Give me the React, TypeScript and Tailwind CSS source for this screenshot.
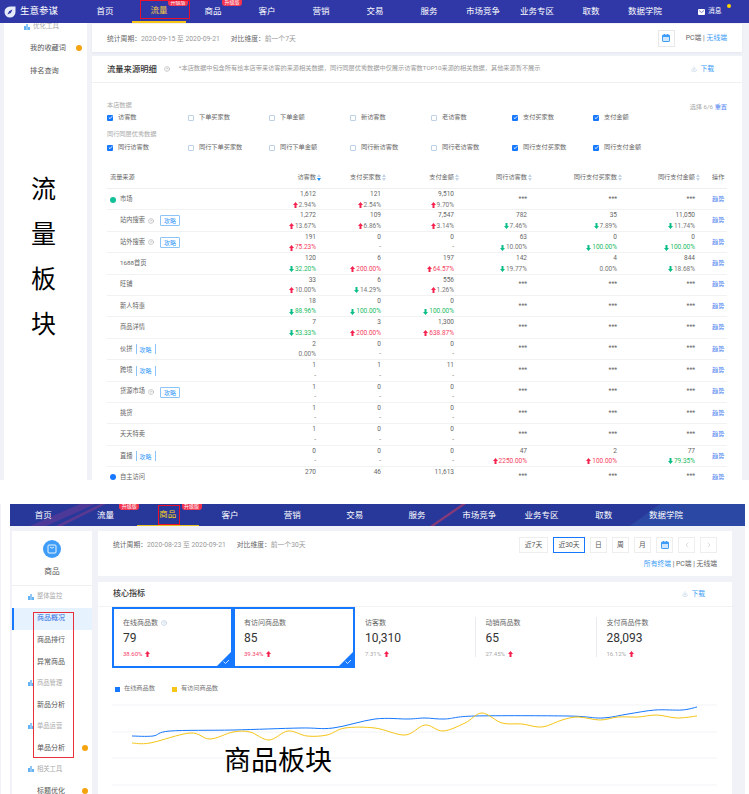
import { ChevronLeft, ChevronRight, CircleHelp, Download } from "lucide-react";

const FONT = "[font-family:Roboto,'Noto_Sans_CJK_SC',sans-serif]";

type Cell = { v: string; p?: string; up?: boolean };
type Row = {
  name: string;
  dot?: string;
  help?: boolean;
  pill?: "full" | "side";
  cells: Cell[];
};

const up = (v: string, p: string): Cell => ({ v, p, up: true });
const down = (v: string, p: string): Cell => ({ v, p, up: false });
const none = (v: string): Cell => ({ v, p: "-" });
const flat = (v: string): Cell => ({ v, p: "0.00%" });
const STARS: Cell[] = [{ v: "***" }, { v: "***" }, { v: "***" }];

const rows: Row[] = [
  { name: "市场", dot: "bg-[#10c096]", cells: [up("1,612", "2.94%"), up("121", "2.54%"), up("9,510", "9.70%"), ...STARS] },
  { name: "站内搜索", help: true, pill: "full", cells: [up("1,272", "13.67%"), up("109", "6.86%"), up("7,547", "3.14%"), down("782", "7.46%"), down("35", "7.89%"), down("11,050", "11.74%")] },
  { name: "站外搜索", help: true, pill: "full", cells: [up("191", "75.23%"), none("0"), none("0"), down("63", "10.00%"), down("0", "100.00%"), down("0", "100.00%")] },
  { name: "1688首页", cells: [down("120", "32.20%"), up("6", "200.00%"), up("197", "64.57%"), down("142", "19.77%"), flat("4"), down("844", "18.68%")] },
  { name: "旺铺", cells: [up("33", "10.00%"), down("6", "14.29%"), up("556", "1.26%"), ...STARS] },
  { name: "新人特惠", cells: [down("18", "88.96%"), down("0", "100.00%"), down("0", "100.00%"), ...STARS] },
  { name: "商品详情", cells: [down("7", "53.33%"), up("3", "200.00%"), up("1,300", "638.87%"), ...STARS] },
  { name: "伙拼", pill: "side", cells: [flat("2"), none("0"), none("0"), ...STARS] },
  { name: "跨境", pill: "side", cells: [none("1"), none("1"), none("11"), ...STARS] },
  { name: "货源市场", help: true, pill: "full", cells: [none("1"), none("0"), none("0"), ...STARS] },
  { name: "挑货", cells: [none("1"), none("0"), none("0"), ...STARS] },
  { name: "天天特卖", cells: [none("1"), none("0"), none("0"), ...STARS] },
  { name: "直播", pill: "side", cells: [none("0"), none("0"), none("0"), up("47", "2250.00%"), up("2", "100.00%"), down("77", "79.35%")] },
  { name: "自主访问", dot: "bg-[#1677ff]", cells: [{ v: "270" }, { v: "46" }, { v: "11,613" }, ...STARS] },
];

const Arrow = ({ isUp }: { isUp: boolean }) => (
  <svg width="5" height="6" viewBox="0 0 5 6" className="shrink-0">
    <polygon
      points={isUp ? "2.5,0 5,3 3.5,3 3.5,6 1.5,6 1.5,3 0,3" : "2.5,6 5,3 3.5,3 3.5,0 1.5,0 1.5,3 0,3"}
      fill={isUp ? "#f5224f" : "#0bbd87"}
    />
  </svg>
);

const SortIcon = ({ active }: { active?: boolean }) => (
  <svg width="4" height="7" viewBox="0 0 4 7" className="shrink-0 ml-px">
    <polygon points="2,0 4,3 0,3" fill="#c3d3e8" />
    <polygon points="2,7 4,4 0,4" fill={active ? "#1890ff" : "#c3d3e8"} />
  </svg>
);

const BarsIcon = () => (
  <svg width="6" height="6" viewBox="0 0 6 6" className="shrink-0">
    <rect x="0" y="2" width="2" height="4" fill="#63b3f5" />
    <rect x="2" y="0" width="2" height="6" fill="#8fc8f8" />
    <rect x="4" y="3" width="2" height="3" fill="#63b3f5" />
  </svg>
);

const CalendarIcon = () => (
  <svg width="8" height="8" viewBox="0 0 8 8">
    <rect x="0.5" y="1" width="7" height="6.5" rx="0.6" fill="#cfe6fd" stroke="#3d9df8" />
    <rect x="0.5" y="1" width="7" height="2" fill="#3d9df8" />
    <rect x="2" y="0" width="1" height="1.5" fill="#3d9df8" />
    <rect x="5" y="0" width="1" height="1.5" fill="#3d9df8" />
  </svg>
);

const Pill = ({ kind }: { kind: "full" | "side" }) => (
  <span
    className={
      kind === "full"
        ? "ml-[6px] w-[20px] h-[11px] flex items-center justify-center border border-[#8cc4f8] rounded-[1px] text-[6px] text-[#3d9df8]"
        : "ml-[3px] w-[20px] h-[10px] flex items-center justify-center border-x border-[#8cc4f8] text-[6px] text-[#3d9df8]"
    }
  >
    攻略
  </span>
);

const ValueCell = ({ cell }: { cell: Cell }) => {
  if (!cell.p) {
    const single = cell.v === "***";
    return <div className={`text-right text-[#666] text-[6.5px] ${single ? "" : "self-start pt-px"}`}>{cell.v}</div>;
  }
  const pct = parseFloat(cell.p);
  const big = !isNaN(pct) && pct >= 20;
  const color = big ? (cell.up ? "text-[#f5405f]" : "text-[#22bb66]") : "text-[#777]";
  return (
    <div className="flex flex-col items-end text-[6.5px] leading-[10.5px] text-[#666]">
      <span>{cell.v}</span>
      <span className={`flex items-center gap-px ${color}`}>
        {cell.p !== "-" && cell.p !== "0.00%" && <Arrow isUp={!!cell.up} />}
        {cell.p}
      </span>
    </div>
  );
};

const TABLE_COLS = "grid grid-cols-[144px_65px_65px_73px_73px_90px_78px_32px] items-center";

const TrafficTable = () => (
  <div>
    <div className={`${TABLE_COLS} h-[22px] border-b border-[#eeeeee] text-[6.2px] text-[#666]`}>
      <span className="pl-[3px]">流量来源</span>
      {["访客数", "支付买家数", "支付金额", "同行访客数", "同行支付买家数", "同行支付金额"].map((h, i) => (
        <span key={h} className="flex justify-end items-center mr-[-5px] whitespace-nowrap">
          {h}
          <SortIcon active={i === 0} />
        </span>
      ))}
      <span className="pl-[17px]">操作</span>
    </div>
    {rows.map((row) => (
      <div key={row.name} className={`${TABLE_COLS} h-[21.4px] border-b border-[#f2f2f2]`}>
        <div className="flex items-center text-[6.25px] text-[#666] pl-[13px] relative">
          {row.dot && <span className={`absolute left-[3px] w-[6px] h-[6px] rounded-full ${row.dot}`} />}
          <span>{row.name}</span>
          {row.help && <CircleHelp size={6} strokeWidth={1.5} className="ml-[3px] text-[#888]" />}
          {row.pill && <Pill kind={row.pill} />}
        </div>
        {row.cells.map((c, i) => (
          <ValueCell key={i} cell={c} />
        ))}
        <span className="pl-[17px] text-[6.2px] text-[#4a7ff0]">趋势</span>
      </div>
    ))}
  </div>
);

const CheckItem = ({ label, on }: { label: string; on?: boolean }) => (
  <div className="flex items-center w-[81px] text-[6.2px] text-[#666]">
    <span
      className={`w-[6px] h-[6px] mr-[5px] rounded-[1px] flex items-center justify-center shrink-0 ${
        on ? "bg-[#1677ff]" : "border border-[#bcd0e6] bg-white"
      }`}
    >
      {on && (
        <svg width="5" height="5" viewBox="0 0 5 5">
          <path d="M0.8 2.5 L2 3.7 L4.2 1.2" stroke="white" strokeWidth="0.9" fill="none" />
        </svg>
      )}
    </span>
    {label}
  </div>
);

const Logo = () => (
  <svg width="12" height="12" viewBox="0 0 12 12">
    <path d="M6 0.5 H11.5 V6 A5.5 5.5 0 1 1 6 0.5 Z" fill="#e8ecfa" />
    <path d="M8.6 3.4 L6.8 7 L3.4 8.6 L5.2 5 Z" fill="#3038a8" />
  </svg>
);

const topNav = ["首页", "流量", "商品", "客户", "营销", "交易", "服务", "市场竞争", "业务专区", "取数", "数据学院"];

const TopPanel = () => (
  <div className="h-[480px] bg-[#f1f2f8] overflow-hidden">
    <div className="h-[23px] bg-[#3038a8] flex items-center text-white relative">
      <div className="w-[78px] pl-[4px] flex items-center gap-[4px] text-[9.5px]">
        <Logo />
        生意参谋
      </div>
      {topNav.map((n, i) => (
        <div
          key={n}
          className={`relative w-[54px] h-full flex items-center justify-center text-[8.5px] ${
            i === 1 ? "text-[#f5c842] border-b-2 border-[#f5c518]" : ""
          }`}
        >
          {n}
          {(i === 1 || i === 2) && (
            <span className="absolute left-[36px] top-0 w-[20px] h-[6px] overflow-hidden rounded-b-[3px] bg-[#f0334f] text-[5px] leading-[5px] text-center text-white">
              升级版
            </span>
          )}
        </div>
      ))}
      <div className="ml-[26px] flex items-center gap-[3px] text-[6.8px] relative">
        <svg width="7" height="6" viewBox="0 0 7 6">
          <rect width="7" height="6" rx="1" fill="white" />
          <path d="M1 1.5 L3.5 3.5 L6 1.5" stroke="#3038a8" strokeWidth="0.6" fill="none" />
        </svg>
        消息
        <span className="absolute right-[-9px] top-[-2px] w-[4px] h-[4px] rounded-full bg-[#ffd400]" />
      </div>
      <div className="absolute left-[140px] top-0 w-[50px] h-[19px] border border-[#e8102a]" />
    </div>

    <div className="flex pl-[4px] gap-[5px]">
      <div className="w-[83px] h-[457px] bg-white shrink-0">
        <div className="h-[8px] pl-[20px] flex items-center gap-[3px] text-[6.5px] text-[#aaa]">
          <BarsIcon />
          优化工具
        </div>
        <div className="mt-[6px] h-[22px] pl-[26px] pr-[5px] flex items-center justify-between text-[7.2px] text-[#555]">
          我的收藏词
          <span className="w-[6px] h-[6px] rounded-full bg-[#f5a30f]" />
        </div>
        <div className="mt-px h-[22px] pl-[26px] flex items-center text-[7.2px] text-[#555]">排名查询</div>
        <div className="mt-[85px] flex flex-col pl-[27px] text-[25px] leading-[45px] text-black">
          <span>流</span>
          <span>量</span>
          <span>板</span>
          <span>块</span>
        </div>
      </div>

      <div className="w-[650px] shrink-0 pt-px">
        <div className="h-[28px] bg-white px-[15px] flex items-center justify-between shadow-[0_1px_2px_#e4e6f0] text-[6.8px]">
          <div className="flex gap-[11px] pt-[2px] text-[#999]">
            <span>
              <span className="text-[#666]">统计周期：</span>2020-09-15 至 2020-09-21
            </span>
            <span>
              <span className="text-[#666]">对比维度：</span>前一个7天
            </span>
          </div>
          <div className="flex items-center">
            <span className="w-[17px] h-[17px] border border-[#e8e8e8] flex items-center justify-center mr-[11px]">
              <CalendarIcon />
            </span>
            <span className="text-[#666]">PC端 | </span>
            <span className="text-[#3d9df8] ml-[2px]">无线端</span>
          </div>
        </div>

        <div className="mt-[4px] bg-white h-[430px]">
          <div className="h-[27px] px-[15px] flex items-center border-b border-[#f0f0f0]">
            <span className="text-[8.3px] font-medium text-[#333]">流量来源明细</span>
            <CircleHelp size={6} strokeWidth={1.5} className="ml-[7px] text-[#888]" />
            <span className="ml-[9px] text-[6.2px] text-[#999] whitespace-nowrap">
              *本店数据中包含所有给本店带来访客的来源相关数据，同行同层优秀数据中仅展示访客数TOP10来源的相关数据，其他来源暂不展示
            </span>
            <span className="ml-auto mr-[13px] flex items-center gap-[3px] text-[6.8px] text-[#3d9df8]">
              <Download size={6} className="text-[#aac4dc]" />
              下载
            </span>
          </div>
          <div className="px-[15px]">
            <div className="pt-[17px] h-[28px] flex justify-between items-center text-[6.2px] text-[#aaa]">
              <span>本店数据</span>
              <span className="mt-[4px]">
                选择 6/6 <span className="text-[#4a7ff0]">重置</span>
              </span>
            </div>
            <div className="flex h-[14px] items-center">
              <CheckItem label="访客数" on />
              <CheckItem label="下单买家数" />
              <CheckItem label="下单金额" />
              <CheckItem label="新访客数" />
              <CheckItem label="老访客数" />
              <CheckItem label="支付买家数" on />
              <CheckItem label="支付金额" on />
            </div>
            <div className="mt-[5px] h-[10px] flex items-center text-[6.2px] text-[#aaa]">同行同层优秀数据</div>
            <div className="flex h-[16px] items-center">
              <CheckItem label="同行访客数" on />
              <CheckItem label="同行下单买家数" />
              <CheckItem label="同行下单金额" />
              <CheckItem label="同行新访客数" />
              <CheckItem label="同行老访客数" />
              <CheckItem label="同行支付买家数" on />
              <CheckItem label="同行支付金额" on />
            </div>
            <div className="mt-[11px]">
              <TrafficTable />
            </div>
          </div>
        </div>
      </div>
    </div>
  </div>
);

const metrics = [
  { label: "在线商品数", value: "79", pct: "38.60%", active: true, help: true, box: "w-[121px]" },
  { label: "有访问商品数", value: "85", pct: "39.34%", active: true, box: "w-[122px]" },
  { label: "访客数", value: "10,310", pct: "7.31%", box: "w-[119.5px] pl-[10px]" },
  { label: "动销商品数", value: "65", pct: "27.45%", box: "w-[121px] pl-[11px]", divider: true },
  { label: "支付商品件数", value: "28,093", pct: "16.12%", box: "w-[121px] pl-[11px]", divider: true },
];

const sideItems: { label: string; kind: "group" | "item" | "active"; dot?: boolean }[] = [
  { label: "整体监控", kind: "group" },
  { label: "商品概况", kind: "active" },
  { label: "商品排行", kind: "item" },
  { label: "异常商品", kind: "item" },
  { label: "商品管理", kind: "group" },
  { label: "新品分析", kind: "item" },
  { label: "单品运营", kind: "group" },
  { label: "单品分析", kind: "item", dot: true },
  { label: "相关工具", kind: "group" },
  { label: "标题优化", kind: "item", dot: true },
];

const sideClass = {
  group: "h-[21.5px] pl-[16px] gap-[3px] text-[#aaa] text-[6.3px]",
  item: "h-[21.5px] pl-[25px] pr-[4px] justify-between text-[#555] text-[7px]",
  active: "h-[22px] bg-[#e6f2fe] border-l-2 border-[#1677ff] pl-[23px] text-[#2f6fe0] text-[7px]",
};

// smooth line through sampled chart points
const smooth = (pts: number[][]) => {
  let d = `M${pts[0][0]} ${pts[0][1]}`;
  for (let i = 0; i < pts.length - 1; i++) {
    const p0 = pts[Math.max(i - 1, 0)];
    const p1 = pts[i];
    const p2 = pts[i + 1];
    const p3 = pts[Math.min(i + 2, pts.length - 1)];
    const c1x = p1[0] + (p2[0] - p0[0]) / 6;
    const c1y = p1[1] + (p2[1] - p0[1]) / 6;
    const c2x = p2[0] - (p3[0] - p1[0]) / 6;
    const c2y = p2[1] - (p3[1] - p1[1]) / 6;
    d += ` C${c1x} ${c1y} ${c2x} ${c2y} ${p2[0]} ${p2[1]}`;
  }
  return d;
};

const shift = (pts: number[][]) => pts.map(([x, y]) => [x - 112, y - 700]);

const bluePts = shift([[132, 736], [153, 736], [170, 731], [233, 730], [300, 728], [333, 728], [375, 719], [408, 719], [425, 718], [445, 719], [475, 716], [568, 716], [602, 718], [628, 714], [655, 710], [682, 710], [697, 707]]);
const yellowPts = shift([[132, 743], [150, 743], [190, 733], [210, 739], [233, 732], [250, 732], [269, 740], [288, 731], [307, 736], [327, 735], [345, 728], [375, 728], [405, 735], [425, 725], [443, 731], [465, 723], [482, 713], [502, 723], [522, 724], [542, 727], [562, 720], [578, 717], [600, 720], [618, 717], [638, 717], [657, 715], [677, 718], [697, 716]]);

const Chart = () => (
  <svg width="605" height="94" viewBox="0 0 605 94" className="block">
    {[5, 32, 58, 85].map((y) => (
      <line key={y} x1="0" x2="605" y1={y} y2={y} stroke="#f2f3f6" />
    ))}
    <path d={smooth(bluePts)} fill="none" stroke="#1677ff" strokeWidth="1" />
    <path d={smooth(yellowPts)} fill="none" stroke="#f5c518" strokeWidth="1" />
  </svg>
);

const MetricCard = ({ m }: { m: (typeof metrics)[number] }) => (
  <div
    className={`relative h-[61px] ${m.box} ${
      m.active ? "border-2 border-[#1677ff] pl-[9px] pt-[9px]" : "pt-[11px]"
    }`}
  >
    <div className="flex items-center text-[7px] text-[#666] h-[10px]">
      {m.label}
      {m.help && <CircleHelp size={6} strokeWidth={1.5} className="ml-[3px] text-[#8aa6c8]" />}
    </div>
    <div className="mt-[2px] text-[12px] leading-[16px] text-[#333]">{m.value}</div>
    <div className={`mt-[3px] flex items-center gap-[3px] text-[6px] ${m.active ? "text-[#f5406a]" : "text-[#aaa]"}`}>
      {m.pct}
      <Arrow isUp />
    </div>
    {m.active && (
      <svg width="14" height="14" viewBox="0 0 14 14" className="absolute right-0 bottom-0">
        <polygon points="14,0 14,14 0,14" fill="#1677ff" />
        <path d="M6.5 9.5 L8.5 11.5 L12 8" stroke="white" strokeWidth="0.8" fill="none" />
      </svg>
    )}
    {m.divider && <span className="absolute left-0 top-[10px] h-[40px] border-l border-[#e8ecf2]" />}
  </div>
);

const SmallButton = ({ label, box, selected }: { label: string; box: string; selected?: boolean }) => (
  <span
    className={`h-[16px] flex items-center justify-center text-[6.8px] text-[#555] ${box} ${
      selected ? "border border-[#1677ff]" : "border border-[#eeeeee]"
    }`}
  >
    {label}
  </span>
);

const BottomPanel = () => (
  <div className="relative h-[290px] pl-[10px] overflow-hidden">
    <div className="absolute left-0 top-0 bottom-0 w-px bg-[#f1f2f8]" />
    <div className="w-[735px] h-[22px] bg-[#28389a] relative flex items-center text-white pl-[2px] overflow-hidden">
      <svg width="735" height="22" viewBox="0 0 735 22" className="absolute left-0 top-0">
        <polygon points="20,22 70,0 86,0 36,22" fill="#6a3a98" opacity="0.55" />
        <polygon points="46,22 90,0 96,0 52,22" fill="#8a3a88" opacity="0.5" />
        <polygon points="420,22 452,0 456,0 424,22" fill="#b03a6a" opacity="0.7" />
        <polygon points="620,22 650,0 735,0 735,22" fill="#2c50a8" opacity="0.7" />
      </svg>
      {topNav.map((n, i) => (
        <div
          key={n}
          className={`relative w-[62.3px] h-full flex items-center justify-center text-[8.5px] ${
            i === 2 ? "text-[#f5d020] border-b border-[#e8c020]" : ""
          }`}
        >
          {n}
          {(i === 1 || i === 2) && (
            <span className="absolute left-[45px] top-0 w-[20px] h-[6px] overflow-hidden rounded-b-[3px] bg-[#f0334f] text-white text-[5px] leading-[5px] text-center">
              升级版
            </span>
          )}
        </div>
      ))}
      <div className="absolute left-[148px] top-px w-[22px] h-[20px] border border-[#e8102a]" />
    </div>

    <div className="w-[735px] bg-[#f1f2f8] flex pl-[2px] pt-[5px] gap-[6px] h-[268px]">
      <div className="w-[80px] bg-white shrink-0 h-[270px]">
        <div className="h-[55px] flex flex-col items-center border-b border-[#f0f0f0] pt-[9px]">
          <span className="w-[18px] h-[18px] rounded-full bg-[#3d9df8] flex items-center justify-center">
            <svg width="10" height="10" viewBox="0 0 10 10">
              <rect x="1" y="1" width="8" height="8" rx="1" fill="none" stroke="white" strokeWidth="0.9" />
              <path d="M3 3 Q5 5.5 7 3" fill="none" stroke="white" strokeWidth="0.8" />
            </svg>
          </span>
          <span className="mt-[8px] text-[7.7px] text-[#555]">商品</span>
        </div>
        {sideItems.map((s) => (
          <div key={s.label} className={`flex items-center ${sideClass[s.kind]}`}>
            {s.kind === "group" && <BarsIcon />}
            <span>{s.label}</span>
            {s.dot && <span className="w-[6px] h-[6px] rounded-full bg-[#f5a30f]" />}
          </div>
        ))}
      </div>

      <div className="w-[634px] shrink-0">
        <div className="h-[45px] bg-white pl-[15px] pr-[15px] pt-[6px] flex justify-between">
          <div className="flex gap-[11px] mt-[3px] text-[6.8px] text-[#999] h-[10px] items-center">
            <span>
              <span className="text-[#666]">统计周期：</span>2020-08-23 至 2020-09-21
            </span>
            <span>
              <span className="text-[#666]">对比维度：</span>前一个30天
            </span>
          </div>
          <div className="flex flex-col items-end">
            <div className="flex gap-[5px]">
              <SmallButton label="近7天" box="w-[29px]" />
              <SmallButton label="近30天" box="w-[32px]" selected />
              <SmallButton label="日" box="w-[17px]" />
              <SmallButton label="周" box="w-[17px]" />
              <SmallButton label="月" box="w-[17px]" />
              <span className="w-[17px] h-[16px] border border-[#eeeeee] flex items-center justify-center">
                <CalendarIcon />
              </span>
              <span className="w-[17px] h-[16px] border border-[#eeeeee] flex items-center justify-center text-[#ccc]">
                <ChevronLeft size={8} />
              </span>
              <span className="w-[17px] h-[16px] border border-[#eeeeee] flex items-center justify-center text-[#ccc]">
                <ChevronRight size={8} />
              </span>
            </div>
            <div className="mt-[6px] text-[6.8px] text-[#666]">
              <span className="text-[#3d9df8]">所有终端</span> | PC端 | 无线端
            </div>
          </div>
        </div>

        <div className="mt-[6px] bg-white h-[212px]">
          <div className="h-[25px] pl-[15px] pr-[27px] flex items-center justify-between border-b border-[#f2f2f2]">
            <span className="text-[8px] font-medium text-[#333]">核心指标</span>
            <span className="flex items-center gap-[3px] text-[6.8px] text-[#3d9df8]">
              <Download size={6} className="text-[#aac4dc]" />
              下载
            </span>
          </div>
          <div className="flex pl-[14px]">
            {metrics.map((m) => (
              <MetricCard key={m.label} m={m} />
            ))}
          </div>
          <div className="pl-[17px] mt-[17px] h-[8px] flex items-center text-[6.2px] text-[#777]">
            <span className="w-[5px] h-[5px] bg-[#1677ff] mr-[4px]" />
            在线商品数
            <span className="w-[5px] h-[5px] bg-[#f5c518] ml-[17px] mr-[4px]" />
            有访问商品数
          </div>
          <div className="pl-[14px] mt-[7px]">
            <Chart />
          </div>
        </div>
      </div>
    </div>

    {/* annotations pasted over the screenshot */}
    <div className="absolute left-[33px] top-[108px] w-[41px] h-[146px] border border-[#e8303a]" />
    <div className="absolute left-[224px] top-[240px] text-[27px] leading-[34px] text-black">商品板块</div>
  </div>
);

export default function App() {
  return (
    <div className={`w-[749px] h-[794px] overflow-hidden bg-white ${FONT}`}>
      <TopPanel />
      <div className="h-[24px]" />
      <BottomPanel />
    </div>
  );
}
